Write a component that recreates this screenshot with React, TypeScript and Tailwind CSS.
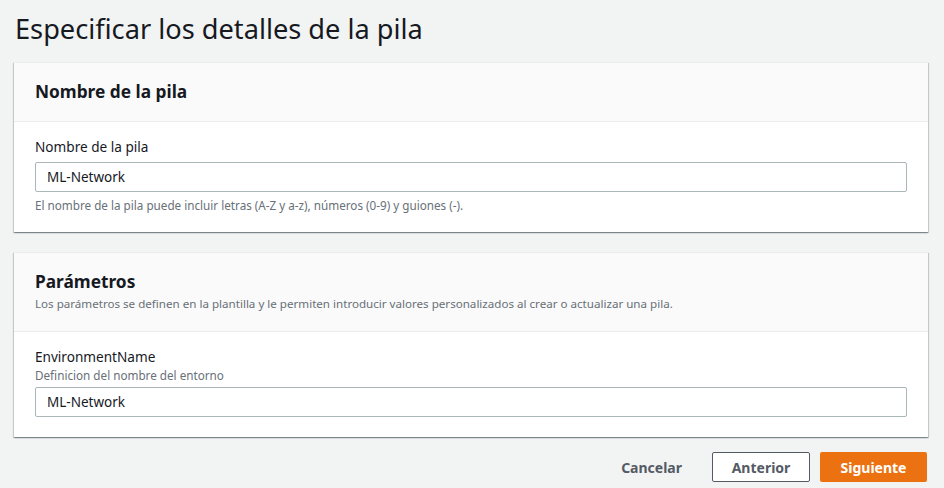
export default function App() {
  return (
    <div className="min-h-[488px] bg-[#f2f3f3] px-[14px] pr-[16px] font-['Noto_Sans',sans-serif] text-[#16191f]">
      <h1 className="pt-[11px] pb-[15px] pl-[1px] text-[27.2px] leading-[36px] font-normal">
        Especificar los detalles de la pila
      </h1>

      {/* Stack name */}
      <section className="bg-white border-t border-[#eaeded] shadow-[0_1px_1px_0_rgba(0,28,36,0.3),1px_1px_1px_0_rgba(0,28,36,0.15),-1px_1px_1px_0_rgba(0,28,36,0.15)]">
        <div className="bg-[#fafafa] border-b border-[#eaeded] px-[21px] py-[18px]">
          <h2 className="text-[17.3px] leading-[22px] font-bold">Nombre de la pila</h2>
        </div>
        <div className="px-[21px] pt-[15px] pb-[19px]">
          <label className="block text-[13.6px] leading-[20px]">Nombre de la pila</label>
          <div className="mt-[5px] h-[30px] border border-[#aab7b8] rounded-[2px] px-[11px] flex items-center text-[13.5px]">
            ML-Network
          </div>
          <p className="mt-[5px] text-[11.7px] leading-[16px] text-[#687078]">
            El nombre de la pila puede incluir letras (A-Z y a-z), números (0-9) y guiones (-).
          </p>
        </div>
      </section>

      {/* Parameters */}
      <section className="mt-[20px] bg-white border-t border-[#eaeded] shadow-[0_1px_1px_0_rgba(0,28,36,0.3),1px_1px_1px_0_rgba(0,28,36,0.15),-1px_1px_1px_0_rgba(0,28,36,0.15)]">
        <div className="bg-[#fafafa] border-b border-[#eaeded] px-[21px] pt-[18px] pb-[19px]">
          <h2 className="text-[17.3px] leading-[22px] font-bold">Parámetros</h2>
          <p className="mt-[3px] text-[11.6px] leading-[16px] text-[#687078]">
            Los parámetros se definen en la plantilla y le permiten introducir valores personalizados al crear o actualizar una pila.
          </p>
        </div>
        <div className="px-[21px] pt-[15px] pb-[20px]">
          <label className="block text-[13.6px] leading-[20px]">EnvironmentName</label>
          <p className="text-[11.7px] leading-[16px] text-[#687078]">Definicion del nombre del entorno</p>
          <div className="mt-[4px] h-[30px] border border-[#aab7b8] rounded-[2px] px-[11px] flex items-center text-[13.5px]">
            ML-Network
          </div>
        </div>
      </section>

      <div className="mt-[15px] flex items-center justify-end gap-[10px] pr-[1px]">
        <button className="h-[30px] px-[20px] text-[14px] font-bold text-[#545b64]">Cancelar</button>
        <button className="h-[30px] w-[98px] border border-[#545b64] rounded-[2px] bg-white text-[14px] font-bold text-[#545b64]">
          Anterior
        </button>
        <button className="h-[30px] w-[107px] rounded-[2px] bg-[#ec7211] text-[14px] font-bold text-white">
          Siguiente
        </button>
      </div>
    </div>
  );
}
